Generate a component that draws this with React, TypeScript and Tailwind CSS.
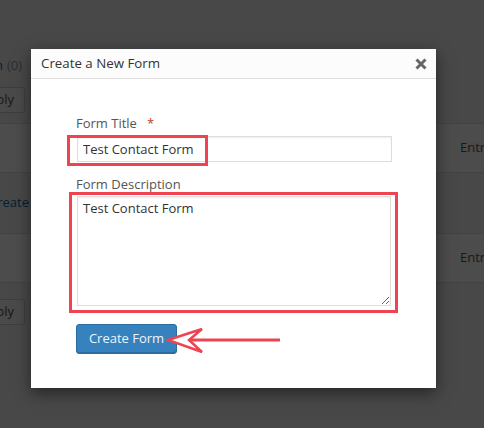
import React from 'react';

const font = "font-['Open_Sans','Liberation_Sans',sans-serif]";

function BgButton() {
  return (
    <div className="flex h-[26px] w-[25px] justify-end overflow-hidden">
      <div className="flex h-[26px] w-[56px] shrink-0 items-center justify-center rounded-[3px] border border-[#cccccc] bg-[#f7f7f7] text-[13px] text-[#555555]">
        Apply
      </div>
    </div>
  );
}

function Background() {
  return (
    <div className="flex flex-col">
      {/* Filters + bulk action */}
      <div className="flex h-[123px] flex-col pt-[56px]">
        <div className="-ml-[31px] h-[18px] whitespace-nowrap text-[13px] leading-[18px]">
          <span className="text-[#0073aa]">Trash</span>
          <span className="ml-1 text-[#999999]">(0)</span>
        </div>
        <div className="mt-[13px]">
          <BgButton />
        </div>
      </div>

      {/* Table rows */}
      <div className="flex h-[50px] items-center border-y border-[#e1e1e1] bg-white pl-[460px] text-[13px] text-[#555555]">
        <span className="whitespace-nowrap">Entries</span>
      </div>
      <div className="flex h-[60px] items-center">
        <div className="flex w-[29px] justify-end overflow-hidden whitespace-nowrap text-[13px] text-[#0073aa]">
          <span className="shrink-0">Create</span>
        </div>
      </div>
      <div className="flex h-[50px] items-center border-y border-[#e1e1e1] bg-white pl-[460px] text-[13px] text-[#555555]">
        <span className="whitespace-nowrap">Entries</span>
      </div>

      <div className="pt-[16px]">
        <BgButton />
      </div>
    </div>
  );
}

function CloseIcon() {
  return (
    <svg width="12" height="12" viewBox="0 0 12 12">
      <path d="M1.5 1.5 L10.5 10.5 M10.5 1.5 L1.5 10.5" stroke="#666666" strokeWidth="3" strokeLinecap="butt" />
    </svg>
  );
}

function Arrow() {
  return (
    <svg className="absolute left-[134px] top-[276px]" width="120" height="30" viewBox="0 0 120 30">
      <line x1="24" y1="15" x2="115" y2="15" stroke="#ee4452" strokeWidth="3" />
      <path
        d="M3 15 L37 4 L24 15 L37 27 Z"
        fill="#ffffff"
        stroke="#ee4452"
        strokeWidth="2.5"
        strokeLinejoin="miter"
      />
    </svg>
  );
}

function Modal() {
  return (
    <div className="absolute left-[31px] top-[49px] flex h-[339px] w-[405px] flex-col bg-white shadow-[0_5px_15px_rgba(0,0,0,0.5)]">
      {/* Header */}
      <div className="flex h-[30px] shrink-0 items-center justify-between border-b border-[#dddddd] bg-[#fcfcfc] pl-[10px] pr-[9px]">
        <span className="text-[13.3px] text-[#333333]">Create a New Form</span>
        <CloseIcon />
      </div>

      {/* Body */}
      <div className="flex flex-col pl-[46px] pt-[35px]">
        <label className="-ml-px flex h-[18px] items-center text-[13px] leading-[18px] text-[#555555]">
          Form Title
          <span className="ml-[10px] text-[#c0392b]">*</span>
        </label>
        <input
          readOnly
          defaultValue="Test Contact Form"
          className="mt-[4px] h-[26px] w-[315px] border border-[#dddddd] bg-white px-[5px] text-[13px] text-[#333333] shadow-[inset_0_1px_2px_rgba(0,0,0,0.07)] outline-none"
        />

        <label className="-ml-px mt-[13px] flex h-[18px] items-center text-[13px] leading-[18px] text-[#555555]">
          Form Description
        </label>
        <textarea
          readOnly
          defaultValue="Test Contact Form"
          className="mt-[3px] h-[110px] w-[314px] resize border border-[#dddddd] bg-white px-[5px] py-[2px] text-[13px] leading-[18px] text-[#333333] shadow-[inset_0_1px_2px_rgba(0,0,0,0.07)] outline-none"
        />

        <div className="mt-[18px]">
          <button className="-ml-px flex h-[30px] w-[101px] items-center justify-center rounded-[3px] border border-[#2a6d9e] bg-[#3582be] text-[13px] text-[#eef4fa] shadow-[inset_0_-1px_0_#2a6d9e]">
            Create Form
          </button>
        </div>
      </div>

      {/* Annotations */}
      <div className="pointer-events-none absolute left-[36px] top-[86px] h-[31px] w-[141px] border-[3px] border-[#ee4452]" />
      <div className="pointer-events-none absolute left-[38px] top-[143px] h-[121px] w-[329px] border-[3px] border-[#ee4452]" />
      <Arrow />
    </div>
  );
}

export default function App() {
  return (
    <div className={`relative h-[428px] w-[484px] overflow-hidden bg-[#f1f1f1] ${font}`}>
      <Background />
      <div className="absolute inset-0 bg-black/70" />
      <Modal />
    </div>
  );
}
